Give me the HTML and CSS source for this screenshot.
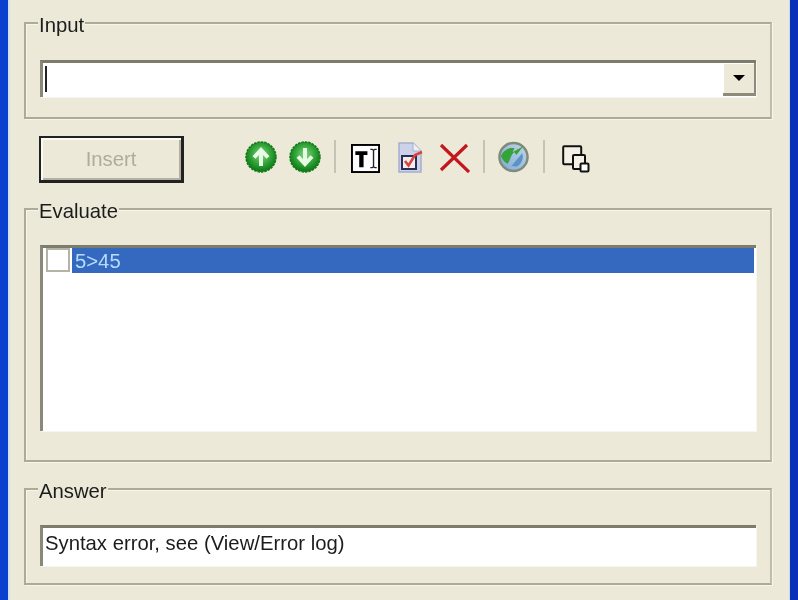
FILE: index.html
```html
<!DOCTYPE html>
<html lang="en">
<head>
<meta charset="utf-8">
<title>Evaluate</title>
<link rel="stylesheet" href="styles.css">
</head>
<body>
<div class="window">
  <section class="group group-input">
    <span class="legend">Input</span>
    <div class="field combo">
      <span class="caret"></span>
      <span class="drop"><span class="arrow"></span></span>
    </div>
  </section>
  <div class="actions">
    <button class="insert" type="button">Insert</button>
    <div class="toolbar">
      <svg class="icon round" viewBox="0 0 32 32"><defs><radialGradient id="g1" cx="50%" cy="42%" r="58%"><stop offset="0" stop-color="#8ad58a"/><stop offset=".55" stop-color="#34a53a"/><stop offset="1" stop-color="#0a7414"/></radialGradient></defs><circle cx="16" cy="16" r="15" fill="url(#g1)" stroke="#0f7a18" stroke-width="1.500" stroke-dasharray="2.500 1"/><path d="M16 25V10M9 16.500 16 9l7 7.500" fill="none" stroke="#e6fae4" stroke-width="4"/></svg>
      <svg class="icon round" viewBox="0 0 32 32"><circle cx="16" cy="16" r="15" fill="url(#g1)" stroke="#0f7a18" stroke-width="1.500" stroke-dasharray="2.500 1"/><path d="M16 7v15M9 15.500l7 7.500 7-7.500" fill="none" stroke="#e6fae4" stroke-width="4"/></svg>
      <span class="sep sep-a"></span>
      <svg class="icon rename" viewBox="0 0 30 30"><rect x="1" y="1" width="28" height="28" fill="#fff" stroke="#000" stroke-width="2"/><path d="M4.500 7.500h12.500v4h-4v12.500h-4.500v-12.500h-4z" fill="#000"/><path d="M20 5.500h2l1.300 1 1.300-1h2M23.300 6v18M20 24.500h2l1.300-1 1.300 1h2" fill="none" stroke="#222" stroke-width="1.400"/></svg>
      <svg class="icon doc" viewBox="0 0 25 31"><path d="M1 1h14l8 8v21H1z" fill="#ccd2ea" stroke="#a7aecb" stroke-width="1.500"/><path d="M15 1v8h8" fill="#eef0f8" stroke="#a7aecb"/><rect x="4" y="14" width="14" height="13" fill="#f5ecec" stroke="#2a2e5a" stroke-width="2"/><path d="M7 19l3.500 4.500L17 13l7-3" fill="none" stroke="#d9433a" stroke-width="2.500"/></svg>
      <svg class="icon cross" viewBox="0 0 31 30"><path d="M2 2 30 29M28 2 2 27" fill="none" stroke="#c2171d" stroke-width="3.200"/></svg>
      <span class="sep sep-b"></span>
      <svg class="icon round globe" viewBox="0 0 32 32"><defs><linearGradient id="g2" x1="0" y1="1" x2="1" y2="0"><stop offset="0" stop-color="#7fa9d6"/><stop offset="1" stop-color="#c6d6e6"/></linearGradient></defs><circle cx="16" cy="16" r="14.500" fill="url(#g2)" stroke="#7e8a7c" stroke-width="2.500"/><path d="M3 15C6 9 11 6 17 7l-2 4 11-6-7 9-2-3c-3 1-4 7-7 12-4-2-6-5-7-8z" fill="#34a33a"/><path d="M14 25l11-13c2 5-1 12-6 14z" fill="#5b93c9"/></svg>
      <span class="sep sep-c"></span>
      <svg class="icon windows" viewBox="0 0 28 28"><rect x="1.200" y="1.200" width="18" height="18" rx="1" fill="#f3f1e6" stroke="#111" stroke-width="2"/><rect x="11" y="10" width="12" height="14" rx="1" fill="#f3f1e6" stroke="#111" stroke-width="2"/><rect x="18.500" y="18.500" width="8" height="8" rx="1" fill="#fdfdf8" stroke="#111" stroke-width="2"/></svg>
    </div>
  </div>
  <section class="group group-evaluate">
    <span class="legend">Evaluate</span>
    <div class="field list">
      <div class="row">
        <span class="check"></span>
        <span class="row-text">5&gt;45</span>
      </div>
    </div>
  </section>
  <section class="group group-answer">
    <span class="legend">Answer</span>
    <div class="field answer">Syntax error, see (View/Error log)</div>
  </section>
</div>
</body>
</html>
```
FILE: styles.css
```css
* { box-sizing: border-box; }
html, body { margin: 0; height: 100%; }
body {
  width: 798px;
  height: 600px;
  overflow: hidden;
  font-family: "Liberation Sans", Arial, sans-serif;
  font-size: 20.3px;
  color: #1c1c1c;
  background: #ece9d8;
}
.window {
  height: 600px;
  padding: 22px 18px 0 14px;
  border-left: 8px solid #0b3fd0;
  border-right: 8px solid #0a30b8;
  box-shadow: inset 2px 0 0 #cfe4f2, inset -1px 0 0 #c9d8ea;
  background: #ece9d8;
  filter: blur(0.6px);
}
.group {
  position: relative;
  border: 2px solid #aeaa98;
  border-right-color: #c0bdaa;
  box-shadow: inset 1px 1px 0 #f7f6ee, 1px 1px 0 #f7f6ee;
  margin-left: 2px;
  padding: 0 14px;
}
.group-input { height: 97px; padding-top: 36px; }
.group-evaluate { height: 254px; padding-top: 35px; }
.group-answer { height: 97px; margin-top: 26px; padding-top: 35px; }
.legend {
  position: absolute;
  left: 12px;
  top: -11px;
  padding: 0 1px;
  line-height: 24px;
  background: #ece9d8;
}
.field {
  position: relative;
  background: #fff;
  border-top: 3px solid #7d7b6c;
  border-left: 3px solid #8a8878;
  box-shadow: 1px 1px 0 #f7f6ee;
}
.combo { height: 37px; }
.caret {
  position: absolute;
  left: 2px;
  top: 3px;
  width: 2px;
  height: 26px;
  background: #222;
}
.drop {
  position: absolute;
  right: 0;
  top: 0;
  width: 33px;
  height: 33px;
  display: flex;
  align-items: center;
  justify-content: center;
  background: #ece9d8;
  border-right: 2px solid #8d8b7c;
  border-bottom: 3px solid #8d8b7c;
  box-shadow: inset 1px 1px 0 #fff;
}
.arrow {
  width: 0;
  height: 0;
  border-left: 6px solid transparent;
  border-right: 6px solid transparent;
  border-top: 6px solid #000;
}
.actions {
  display: flex;
  align-items: flex-start;
  height: 89px;
  padding: 17px 0 0 17px;
}
.insert {
  width: 145px;
  height: 47px;
  padding: 0;
  font: inherit;
  color: #aeac9f;
  background: #ece9d8;
  border: 2px solid #222;
  border-right-width: 3px;
  border-bottom-width: 3px;
  box-shadow: inset 2px 2px 0 #fbfaf3, inset -2px -2px 0 #b4b1a2;
}
.toolbar {
  display: flex;
  align-items: flex-end;
  margin: 4px 0 0 61px;
  height: 33px;
}
.icon { display: block; flex: none; }
.round { width: 32px; height: 32px; margin-right: 12px; }
.sep { width: 2px; height: 33px; background: #c6c3b2; flex: none; }
.sep-a { margin-left: 1px; margin-right: 15px; }
.rename { width: 29px; height: 29px; margin-right: 18px; }
.doc { width: 25px; height: 31px; margin-right: 16px; }
.cross { width: 31px; height: 30px; margin-right: 13px; }
.sep-b { margin-right: 13px; }
.globe { width: 31px; }
.sep-c { margin-left: 2px; margin-right: 17px; }
.windows { width: 28px; height: 28px; }
.list { height: 186px; padding: 0 2px 0 0; }
.row { display: flex; height: 25px; }
.check {
  width: 24px;
  height: 24px;
  margin: 0 2px 0 3px;
  background: #fff;
  border: 2px solid #b5b3a5;
  flex: none;
}
.row-text {
  flex: 1;
  padding-left: 3px;
  line-height: 27px;
  color: #b8dcf8;
  background: #3569c0;
}
.answer {
  height: 41px;
  padding-left: 2px;
  line-height: 30px;
}
```
